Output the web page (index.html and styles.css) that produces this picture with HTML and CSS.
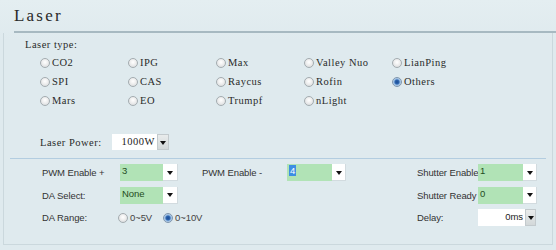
FILE: index.html
```html
<!DOCTYPE html>
<html>
<head>
<meta charset="utf-8">
<link rel="stylesheet" href="styles.css">
</head>
<body>
<div class="page">
  <h1 class="title">Laser</h1>
  <div class="panel">
    <div class="types">
      <div class="cap">Laser type:</div>
      <div class="radio-grid">
        <label class="opt"><span class="radio"></span>CO2</label>
        <label class="opt"><span class="radio"></span>IPG</label>
        <label class="opt"><span class="radio"></span>Max</label>
        <label class="opt"><span class="radio"></span>Valley Nuo</label>
        <label class="opt"><span class="radio"></span>LianPing</label>
        <label class="opt"><span class="radio"></span>SPI</label>
        <label class="opt"><span class="radio"></span>CAS</label>
        <label class="opt"><span class="radio"></span>Raycus</label>
        <label class="opt"><span class="radio"></span>Rofin</label>
        <label class="opt"><span class="radio checked"></span>Others</label>
        <label class="opt"><span class="radio"></span>Mars</label>
        <label class="opt"><span class="radio"></span>EO</label>
        <label class="opt"><span class="radio"></span>Trumpf</label>
        <label class="opt"><span class="radio"></span>nLight</label>
      </div>
    </div>
    <div class="power">
      <span class="plabel">Laser Power:</span>
      <div class="combo">
        <span class="field white serif right w45">1000W</span>
        <span class="btn gray w12"><i class="tri"></i></span>
      </div>
    </div>
    <div class="sep"></div>
    <div class="io">
      <span class="lbl">PWM Enable +</span>
      <div class="combo">
        <span class="field green w43">3</span>
        <span class="btn w15"><i class="tri"></i></span>
      </div>
      <span class="lbl">PWM Enable -</span>
      <div class="combo">
        <span class="field green w45"><span class="hl">4</span></span>
        <span class="btn w14"><i class="tri"></i></span>
      </div>
      <span class="lbl">Shutter Enable</span>
      <div class="combo">
        <span class="field green w45">1</span>
        <span class="btn w14"><i class="tri"></i></span>
      </div>

      <span class="lbl">DA Select:</span>
      <div class="combo">
        <span class="field green w43">None</span>
        <span class="btn w15"><i class="tri"></i></span>
      </div>
      <span class="empty"></span>
      <span class="empty"></span>
      <span class="lbl">Shutter Ready</span>
      <div class="combo">
        <span class="field green w45">0</span>
        <span class="btn w14"><i class="tri"></i></span>
      </div>

      <span class="lbl">DA Range:</span>
      <div class="range">
        <label class="opt2"><span class="radio"></span>0~5V</label>
        <label class="opt2"><span class="radio checked"></span>0~10V</label>
      </div>
      <span class="lbl">Delay:</span>
      <div class="combo">
        <span class="field white right w47">0ms</span>
        <span class="btn gray w11"><i class="tri"></i></span>
      </div>
    </div>
  </div>
</div>
</body>
</html>
```
FILE: styles.css
```css
html, body {
  margin: 0;
  padding: 0;
}
body {
  width: 556px;
  height: 250px;
  overflow: hidden;
  background: #dfeaee;
}
.page {
  width: 556px;
  height: 250px;
  background: linear-gradient(#e4eef1, #dfeaee 40px);
}
.title {
  margin: 0 0 0 14px;
  height: 33px;
  box-sizing: border-box;
  padding-top: 7px;
  border-bottom: 2px solid #a7b9c1;
  font-family: "Liberation Serif", serif;
  font-weight: normal;
  font-size: 17px;
  letter-spacing: 2.2px;
  line-height: 18px;
  color: #2a2a2a;
}
.panel {
  margin-left: 3px;
  width: 550px;
  height: 212px;
  box-sizing: border-box;
  border-left: 1px solid #cbd8dd;
  border-right: 1px solid #cbd8dd;
  border-bottom: 1px solid #cbd8dd;
}
.types {
  padding: 6px 0 0 21px;
  font-family: "Liberation Serif", serif;
  font-size: 10.5px;
  letter-spacing: 0.5px;
  color: #2a2a2a;
}
.cap {
  line-height: 12px;
  height: 12px;
}
.radio-grid {
  margin: 2px 0 0 15px;
  display: grid;
  grid-template-columns: repeat(5, 88px);
  grid-auto-rows: 19px;
}
.opt, .opt2 {
  display: flex;
  align-items: center;
  gap: 2px;
  white-space: nowrap;
}
.radio {
  width: 8px;
  height: 8px;
  border: 1px solid #a4acb0;
  border-radius: 50%;
  background: radial-gradient(circle at 50% 40%, #ffffff 0, #f2f2f2 35%, #d4d6d8 100%);
  flex: none;
}
.radio.checked {
  border-color: #7f96ad;
  background: radial-gradient(circle, #1c4c92 0, #2d65b0 2px, #8fb6df 3px, #e6eef6 5px);
}
.power {
  margin: 24px 0 0 36px;
  height: 16px;
  display: flex;
  align-items: center;
  font-family: "Liberation Serif", serif;
  font-size: 10.5px;
  letter-spacing: 0.5px;
  color: #2a2a2a;
}
.plabel {
  width: 72px;
}
.sep {
  margin: 8px 6px 0 6px;
  height: 1px;
  background: #b3cde0;
}
.io {
  margin: 5px 0 0 38px;
  display: grid;
  grid-template-columns: 78px 82px 85px 130px 61px auto;
  grid-auto-rows: 17px;
  row-gap: 5.5px;
  align-items: center;
  font-family: "Liberation Sans", Arial, sans-serif;
  font-size: 9.5px;
  letter-spacing: -0.1px;
  color: #333;
}
.lbl {
  line-height: 17px;
  white-space: nowrap;
}
.combo {
  display: flex;
  height: 17px;
}
.power .combo {
  height: 16px;
}
.field {
  box-sizing: border-box;
  height: 100%;
  padding: 1px 2px 0 2px;
  line-height: 12px;
  overflow: hidden;
  white-space: nowrap;
}
.field.green {
  background: #b1e3b6;
  color: #1f4d22;
}
.field.white {
  background: #ffffff;
  color: #222;
  padding-top: 2px;
}
.field.right {
  text-align: right;
}
.field.serif {
  font-family: "Liberation Serif", serif;
  font-size: 10.5px;
}
.btn {
  box-sizing: border-box;
  height: 100%;
  background: #ffffff;
  border-right: 1px solid #d2dbdf;
  border-bottom: 1px solid #d2dbdf;
  display: flex;
  align-items: center;
  justify-content: center;
}
.btn.gray {
  background: linear-gradient(#e9ecec, #d3d8d9);
  border: 1px solid #c3cacd;
}
.tri {
  width: 0;
  height: 0;
  border-left: 3px solid transparent;
  border-right: 3px solid transparent;
  border-top: 4px solid #111;
  margin-top: 1px;
}
.hl {
  background: #3d8ee3;
  color: #fff;
  padding: 0 1px;
}
.w11 { width: 11px; }
.w12 { width: 12px; }
.w14 { width: 14px; }
.w15 { width: 15px; }
.w43 { width: 43px; }
.w45 { width: 45px; }
.w47 { width: 47px; }
.range {
  grid-column: 2 / span 3;
  display: flex;
  gap: 11px;
  margin-left: -2px;
  color: #444;
}
```
